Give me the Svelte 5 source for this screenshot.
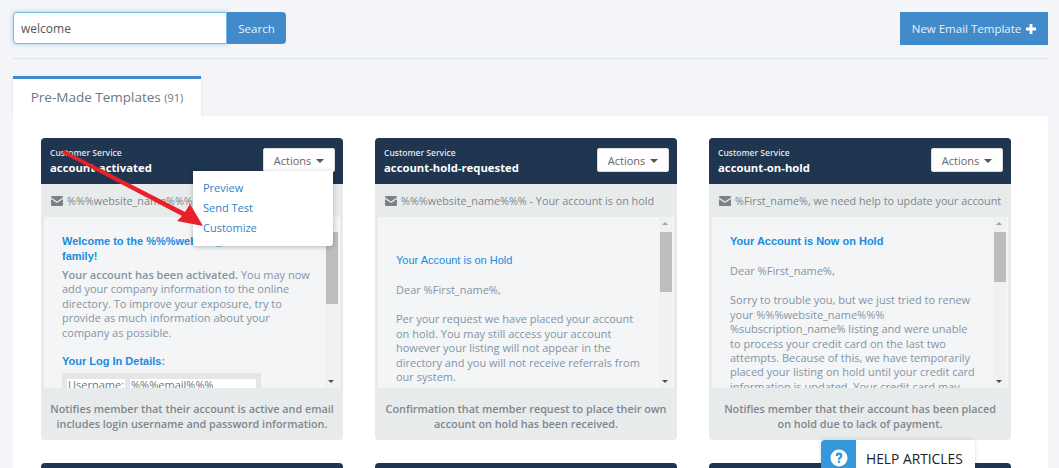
<script>
  const cards = [
    {
      title: 'account-activated',
      subject: '%%%website_name%%% - Your account is active',
      note: 'Notifies member that their account is active and email includes login username and password information.',
      thumb: 72,
      open: true,
    },
    {
      title: 'account-hold-requested',
      subject: '%%%website_name%%% - Your account is on hold',
      note: 'Confirmation that member request to place their own account on hold has been received.',
      thumb: 60,
    },
    {
      title: 'account-on-hold',
      subject: '%First_name%, we need help to update your account',
      note: 'Notifies member that their account has been placed on hold due to lack of payment.',
      thumb: 50,
    },
  ]
</script>

<div class="page">
  <div class="toolbar">
    <div class="search">
      <input type="text" value="welcome" />
      <button>Search</button>
    </div>
    <button class="new">New Email Template
      <svg width="10" height="10" viewBox="0 0 10 10"><path d="M3.6 0h2.8v3.6H10v2.8H6.4V10H3.6V6.4H0V3.6h3.6z" fill="#fff" /></svg>
    </button>
  </div>

  <div class="tabs">
    <div class="tab">Pre-Made Templates <small>(91)</small></div>
  </div>

  <div class="panel">
    <div class="grid">
      {#each cards as card, i}
        <div class="card">
          <div class="head">
            <div>
              <div class="cat">Customer Service</div>
              <div class="title">{card.title}</div>
            </div>
            <button class="actions">Actions <i class="caret"></i></button>
            {#if card.open}
              <div class="menu">
                <a href="#p">Preview</a>
                <a href="#s">Send Test</a>
                <a href="#c">Customize</a>
              </div>
            {/if}
          </div>
          <div class="subject">
            <svg width="12" height="10" viewBox="0 0 12 10"><path d="M1 0h10a1 1 0 0 1 1 1v.5L6 5.5 0 1.5V1a1 1 0 0 1 1-1zM0 3l6 4 6-4v6a1 1 0 0 1-1 1H1a1 1 0 0 1-1-1z" fill="#7b8287" /></svg>
            <span>{card.subject}</span>
          </div>
          <div class="preview">
            <div class="mail">
              {#if i === 0}
                <h4 class="first">Welcome to the %%%website_name%%% family!</h4>
                <p class="intro"><b>Your account has been activated.</b> You may now add your company information to the online directory. To improve your exposure, try to provide as much information about your company as possible.</p>
                <h4 class="details">Your Log In Details<span>:</span></h4>
                <div class="login"><span class="key">Username:</span><span class="val">%%%email%%%</span></div>
              {:else if i === 1}
                <h5>Your Account is on Hold</h5>
                <p>Dear %First_name%,</p>
                <p>Per your request we have placed your account on hold. You may still access your account however your listing will not appear in the directory and you will not receive referrals from our system.</p>
              {:else}
                <h4 class="first">Your Account is Now on Hold</h4>
                <p>Dear %First_name%,</p>
                <p>Sorry to trouble you, but we just tried to renew your %%%website_name%%% %subscription_name% listing and were unable to process your credit card on the last two attempts. Because of this, we have temporarily placed your listing on hold until your credit card information is updated. Your credit card may</p>
              {/if}
            </div>
            <div class="scroll">
              <i class="up"></i>
              <div class="thumb" style="height: {card.thumb}px"></div>
              <i class="down"></i>
            </div>
          </div>
          <div class="note">{card.note}</div>
        </div>
      {/each}
      <div class="card stub"></div>
      <div class="card stub"></div>
      <div class="card stub"></div>
    </div>
  </div>

  <svg class="arrow" width="160" height="90" viewBox="0 0 160 90">
    <path d="M2 3 L4 0 L125 62 L130 54 L143 76 L117 71 L122 66 Z" fill="#e8202a" />
  </svg>

  <div class="help">
    <span class="q"><svg width="18" height="18" viewBox="0 0 18 18"><circle cx="9" cy="9" r="8.5" fill="#fff" /><path d="M5.6 7a3.4 3.4 0 0 1 6.8 0c0 2-2.2 2.2-2.2 3.8H7.9C7.9 8.300 10 8 10 7a1 1 0 0 0-2 0z" fill="#3498db" /><rect x="7.900" y="11.700" width="2.300" height="2.200" fill="#3498db" /></svg></span>
    <span class="label">HELP ARTICLES</span>
  </div>
</div>

<style>
  :global(html), :global(body) {
    margin: 0;
    height: 468px;
    overflow: hidden;
  }

  .page {
    position: relative;
    height: 468px;
    overflow: hidden;
    background: #f3f5f8;
    padding: 12px 11px 0 13px;
    box-sizing: border-box;
    font-family: "Open Sans", sans-serif;
  }

  .toolbar {
    display: flex;
    justify-content: space-between;
    align-items: flex-start;
    height: 46px;
    border-bottom: 1px solid #dfe2e6;
  }

  .search {
    display: flex;
    height: 32px;
  }

  .search input {
    width: 214px;
    box-sizing: border-box;
    padding: 0 7px;
    border: 1px solid #74b9f0;
    border-radius: 4px 0 0 4px;
    box-shadow: 0 0 4px rgba(102, 175, 233, .6);
    font: 12px "Open Sans", sans-serif;
    color: #555;
    outline: none;
  }

  .search button {
    width: 59px;
    border: none;
    border-radius: 0 4px 4px 0;
    background: #428bca;
    color: #e8f1f9;
    font: 500 11.5px "Open Sans", sans-serif;
  }

  .new {
    display: flex;
    align-items: center;
    gap: 5px;
    justify-content: center;
    width: 148px;
    height: 33px;
    border: none;
    background: #428bca;
    color: #e8f1f9;
    font: 500 11.5px "Open Sans", sans-serif;
    padding: 0;
  }

  .tabs {
    display: flex;
    margin-top: 17px;
  }

  .tab {
    width: 188px;
    height: 40px;
    box-sizing: border-box;
    border-top: 3px solid #428bca;
    background: #fff;
    color: #6b7785;
    font-size: 13.500px;
    line-height: 36px;
    text-align: center;
    box-shadow: 0 0 3px rgba(0, 0, 0, .08);
  }

  .tab small {
    font-size: 11px;
  }

  .panel {
    background: #fff;
    padding: 22px 28px;
    height: 400px;
    position: relative;
  }

  .grid {
    display: grid;
    grid-template-columns: repeat(3, 302px);
    column-gap: 32px;
    row-gap: 23px;
  }

  .card {
    height: 302px;
    border-radius: 4px;
    background: #e8ebec;
    display: flex;
    flex-direction: column;
  }

  .stub {
    background: #1f3550;
  }

  .head {
    position: relative;
    height: 46px;
    box-sizing: border-box;
    padding: 9px 8px 0 9px;
    background: #1f3550;
    border-radius: 4px 4px 0 0;
    color: #fff;
    display: flex;
    justify-content: space-between;
  }

  .cat {
    font-size: 8.500px;
    font-weight: 600;
    line-height: 11px;
    color: #dfe4ea;
  }

  .title {
    font-size: 11.300px;
    font-weight: 700;
    line-height: 17px;
    margin-top: 1px;
  }

  .actions {
    width: 72px;
    height: 24px;
    margin-top: 1px;
    border: 1px solid #ddd;
    border-radius: 2px;
    background: #fff;
    color: #666;
    font: 11px "Open Sans", sans-serif;
    padding: 0;
  }

  .caret {
    display: inline-block;
    margin-left: 2px;
    vertical-align: 2px;
    border: 4px solid transparent;
    border-top-color: #555;
    border-bottom: 0;
  }

  .menu {
    position: absolute;
    top: 33px;
    left: 152px;
    z-index: 3;
    width: 140px;
    height: 75px;
    box-sizing: border-box;
    padding: 7px 10px;
    background: #fff;
    border-radius: 0 0 3px 3px;
    box-shadow: 0 1px 5px rgba(0, 0, 0, .25);
    display: flex;
    flex-direction: column;
  }

  .menu a {
    font-size: 11px;
    line-height: 20px;
    color: #2f83c9;
    text-decoration: none;
  }

  .subject {
    height: 33px;
    display: flex;
    align-items: center;
    gap: 4px;
    padding-left: 10px;
    font-size: 10.800px;
    color: #7f868c;
    white-space: nowrap;
    overflow: hidden;
  }

  .preview {
    position: relative;
    margin: 0 3px;
    height: 171px;
    background: #f3f5f7;
    overflow: hidden;
  }

  .mail {
    width: 250px;
    padding: 0 18px;
    font-size: 11px;
    line-height: 14.400px;
    color: #8494a5;
  }

  .mail b {
    font-weight: 600;
  }

  .mail h4, .mail h5 {
    font-family: "Liberation Sans", sans-serif;
    color: #1a8be0;
    margin: 0;
    font-size: 11px;
    line-height: 15px;
  }

  .mail h4 {
    font-weight: 700;
    margin: 17px 0 0;
  }

  .mail h4.details {
    margin-top: 14px;
  }

  .mail h4 span {
    color: #8494a5;
  }

  .mail h5 {
    font-weight: 400;
    padding-top: 36px;
  }

  .mail p {
    margin: 15px 0 0;
  }

  .mail p.intro {
    margin-top: 4px;
  }

  .login {
    margin-top: 4px;
    width: 199px;
    height: 40px;
    background: #e6e6e6;
    padding: 6px 5px;
    box-sizing: border-box;
    display: flex;
    gap: 5px;
    color: #6f7780;
  }

  .login span {
    background: #fff;
    padding: 0 1px;
    height: 24px;
    line-height: 12px;
  }

  .login .key {
    width: 56px;
  }

  .login .val {
    flex: 1;
  }

  .scroll {
    position: absolute;
    top: 0;
    right: 2px;
    bottom: 0;
    width: 13px;
    background: #f1f1f1;
  }

  .thumb {
    position: absolute;
    top: 15px;
    left: 1px;
    right: 0;
    background: #bdbdbd;
  }

  .up, .down {
    position: absolute;
    left: 3px;
    border: 3.500px solid transparent;
  }

  .up {
    top: 5px;
    border-bottom-color: #a3a3a3;
    border-top: 0;
  }

  .down {
    bottom: 5px;
    border-top-color: #505050;
    border-bottom: 0;
  }

  .note {
    flex: 1;
    padding: 13px 8px 0;
    font-size: 10.800px;
    line-height: 15px;
    font-weight: 600;
    text-align: center;
    color: #7f868c;
  }

  .arrow {
    position: absolute;
    top: 150px;
    left: 60px;
    z-index: 5;
  }

  .help {
    position: absolute;
    left: 821px;
    top: 440px;
    width: 154px;
    height: 40px;
    display: flex;
    background: #fff;
    border-radius: 4px 4px 0 0;
    box-shadow: 0 0 4px rgba(0, 0, 0, .15);
    z-index: 6;
  }

  .q {
    width: 35px;
    height: 40px;
    background: #3498db;
    border-radius: 4px 0 0 0;
    display: flex;
    justify-content: center;
    padding-top: 9px;
    box-sizing: border-box;
  }

  .label {
    margin: 9px 0 0 10px;
    font-size: 13.800px;
    line-height: 20px;
    color: #222;
    font-weight: 500;
  }
</style>
